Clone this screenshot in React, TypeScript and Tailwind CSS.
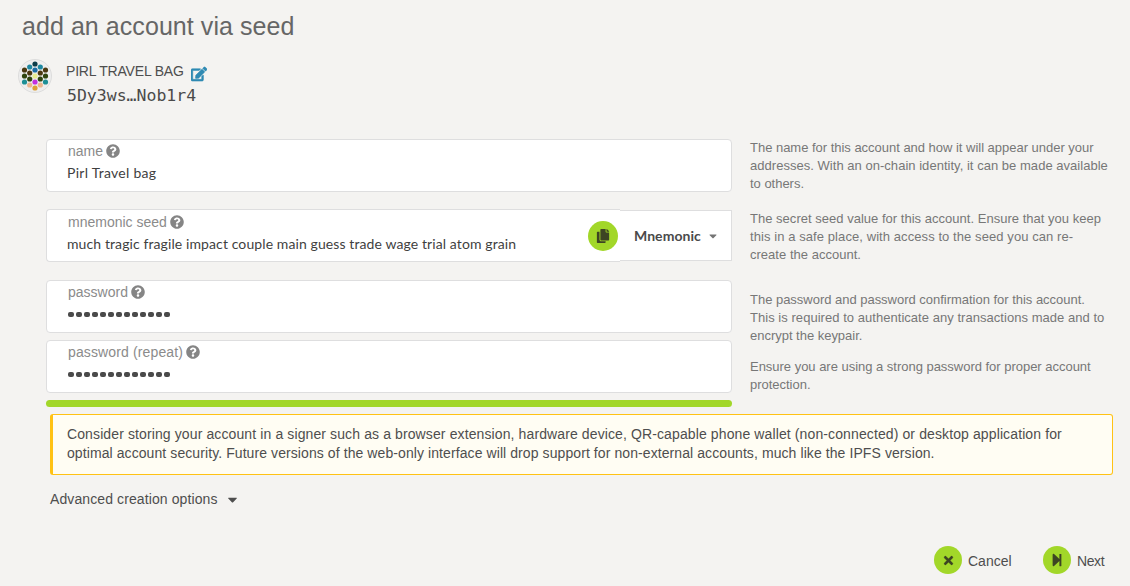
import React from 'react';
import { FaCaretDown, FaCopy, FaEdit, FaQuestionCircle, FaStepForward, FaTimes } from 'react-icons/fa';

const dots: [number, number, string][] = [
  [17, 5, '#0c3d4a'],
  [11.7, 8, '#1e87a0'], [22.3, 8, '#1e87a0'],
  [6.5, 11, '#4a3810'], [17, 11, '#1b6ea5'], [27.5, 11, '#4a3810'],
  [11.7, 14, '#4a3810'], [22.3, 14, '#4a3810'],
  [6.5, 17, '#30450f'], [17, 17, '#e8ee90'], [27.5, 17, '#30450f'],
  [11.7, 20, '#30450f'], [22.3, 20, '#30450f'],
  [6.5, 23, '#1c8f95'], [17, 23, '#c32fe0'], [27.5, 23, '#1c8f95'],
  [11.7, 26, '#ecb58c'], [22.3, 26, '#ecb58c'],
  [17, 29, '#dea035'],
];

function Identicon() {
  return (
    <svg width="34" height="34" viewBox="0 0 34 34" className="mt-px shrink-0">
      <circle cx="17" cy="17" r="16.5" fill="#eeeeee" stroke="#dadada" strokeWidth="0.9" />
      {dots.map(([x, y, fill]) => (
        <circle key={`${x}-${y}`} cx={x} cy={y} r="2.6" fill={fill} />
      ))}
    </svg>
  );
}

function Label({ text, className }: { text: string; className: string }) {
  return (
    <div className="flex h-4 items-center gap-[3px] pl-px text-[14px] leading-4 text-[#8b8b8b]">
      <span className={className}>{text}</span>
      <FaQuestionCircle size={14} color="#858585" />
    </div>
  );
}

function Field({ label, labelClass, children }: { label: string; labelClass: string; children: React.ReactNode }) {
  return (
    <div className="h-[53px] rounded border border-[#dededf] bg-white pt-[3px] pl-5 whitespace-nowrap">
      <Label text={label} className={labelClass} />
      {children}
    </div>
  );
}

function Password() {
  return (
    <div className="mt-3 flex gap-[2px] pl-px">
      {Array.from({ length: 13 }, (_, i) => (
        <span key={i} className="h-[5px] w-[6px] rounded-[2px] bg-[#4a4a4a]" />
      ))}
    </div>
  );
}

function ActionButton({ icon, text, className }: { icon: React.ReactNode; text: string; className: string }) {
  return (
    <button className="flex items-center gap-1.5 text-[14px] text-[#4e4e4e]">
      <span className="flex h-7 w-7 items-center justify-center rounded-full bg-[#a2d729] text-[#3d4423]">{icon}</span>
      <span className={className}>{text}</span>
    </button>
  );
}

const inputText = "mt-[5px] font-[Lato,sans-serif] text-[14px] leading-[18px] text-[#3f3f3f]";

export default function App() {
  return (
    <main className="flex h-[586px] w-[1130px] flex-col overflow-hidden bg-[#f4f3f1] font-['Liberation_Sans',Arial,sans-serif] text-[#4e4e4e]">
      <h1 className="mt-[10px] ml-[22px] h-8 text-[25px] leading-8 tracking-[0.06px] whitespace-nowrap text-[#666666]">add an account via seed</h1>

      <header className="mt-4 ml-[18px] flex h-[51px] gap-[14px] whitespace-nowrap">
        <Identicon />
        <div className="pt-[3px]">
          <div className="flex h-5 items-center gap-[7px] text-[14px]">
            <span className="w-[118px] tracking-[-0.2px]">PIRL TRAVEL BAG</span>
            <FaEdit size={16} color="#2f8ab3" stroke="#2f8ab3" strokeWidth={18} className="mt-1.5" />
          </div>
          <div className="mt-[3px] pl-px font-['DejaVu_Sans_Mono',monospace] text-[16.5px] leading-6 text-[#4a4a4a]">5Dy3ws…Nob1r4</div>
        </div>
      </header>

      <section className="mt-[30px] ml-[46px] flex h-[268px] gap-[18px]">
        <div className="flex w-[686px] flex-col">
          <Field label="name" labelClass="tracking-[0px]">
            <div className={inputText}><span className="tracking-[0.28px]">Pirl Travel bag</span></div>
          </Field>
          <div className="mt-[17px] flex h-[53px] items-center">
            <div className="flex h-[53px] w-[574px] justify-between rounded-l border border-r-0 border-[#dededf] bg-white pt-1 pl-5 whitespace-nowrap">
              <div>
                <Label text="mnemonic seed" className="tracking-[0px]" />
                <div className={inputText}><span className="tracking-[0.1px]">much tragic fragile impact couple main guess trade wage trial atom grain</span></div>
              </div>
              <button className="mt-[7px] mr-[2px] flex h-[30px] w-[30px] items-center justify-center rounded-full bg-[#a2d729] text-[#3d4423]">
                <FaCopy size={14} />
              </button>
            </div>
            <div className="flex h-[51px] w-[112px] items-center border border-l-0 border-[#dededf] bg-white pl-[14px] font-[Lato,sans-serif] text-[14px] font-bold text-[#4a4a4a]">
              <span className="w-[73px] tracking-[0.05px]">Mnemonic</span>
              <FaCaretDown size={12} color="#757575" />
            </div>
          </div>
          <div className="mt-[18px]">
            <Field label="password" labelClass="tracking-[0px]"><Password /></Field>
          </div>
          <div className="mt-[7px]">
            <Field label="password (repeat)" labelClass="tracking-[0.13px]"><Password /></Field>
          </div>
          <div className="mt-[7px] h-[7px] rounded bg-[#a2d729]" />
        </div>

        <div className="flex flex-col text-[13px] leading-[18px] whitespace-nowrap text-[#777777]">
          <p className="tracking-[-0.02px]">The name for this account and how it will appear under your<br /><span className="tracking-[0.03px]">addresses. With an on-chain identity, it can be made available</span><br />to others.</p>
          <p className="mt-[17px] tracking-[0.02px]">The secret seed value for this account. Ensure that you keep<br /><span className="tracking-[0.08px]">this in a safe place, with access to the seed you can re-</span><br />create the account.</p>
          <p className="mt-[27px] tracking-[-0.02px]">The password and password confirmation for this account.<br /><span className="tracking-[0.04px]">This is required to authenticate any transactions made and to</span><br />encrypt the keypair.</p>
          <p className="mt-[13px] tracking-[-0.02px]">Ensure you are using a strong password for proper account<br />protection.</p>
        </div>
      </section>

      <aside className="mt-[7px] ml-[50px] h-[61px] w-[1063px] rounded-[3px] border border-l-[3px] border-[#ffc214] bg-[#fffdf3] pt-[10px] pl-[14px] text-[14px] leading-[19px] whitespace-nowrap">
        <p className="tracking-[0.085px]"><span className="tracking-[0.113px]">Consider storing your account in a signer such as a browser extension, hardware device, QR-capable phone wallet (non-connected) or desktop application for</span><br />optimal account security. Future versions of the web-only interface will drop support for non-external accounts, much like the IPFS version.</p>
      </aside>

      <button className="mt-[14px] ml-[50px] flex h-5 items-center text-[14px] whitespace-nowrap">
        <span className="w-[175px] text-left tracking-[0.1px]">Advanced creation options</span>
        <FaCaretDown size={15} />
      </button>

      <footer className="mt-[37px] ml-[934px] flex gap-[31px] whitespace-nowrap">
        <ActionButton icon={<FaTimes size={13} stroke="currentColor" strokeWidth={10} />} text="Cancel" className="w-11 pt-0.5 text-left" />
        <ActionButton icon={<FaStepForward size={14} />} text="Next" className="pt-0.5 text-left tracking-[-0.4px]" />
      </footer>
    </main>
  );
}
